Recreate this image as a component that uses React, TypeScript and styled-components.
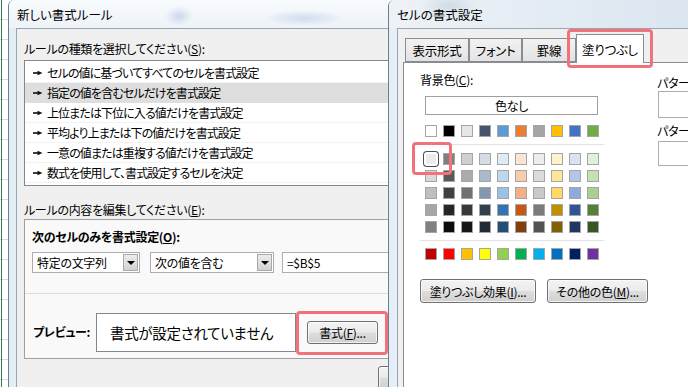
import styled, { createGlobalStyle } from 'styled-components';

const GlobalStyle = createGlobalStyle`
  html, body {
    margin: 0;
    padding: 0;
  }
  body {
    font-family: "Noto Sans CJK JP", "Noto Sans", sans-serif;
    font-size: 12px;
    font-feature-settings: "palt";
    letter-spacing: -0.3px;
    color: #000;
    background: #fff;
  }
  * {
    box-sizing: border-box;
  }
`;

const themeRow = ['#ffffff', '#000000', '#e7e6e6', '#44546a', '#5b9bd5', '#ed7d31', '#a5a5a5', '#ffc000', '#4472c4', '#70ad47'];

const tintRows = [
  ['#f2f2f2', '#7f7f7f', '#d0cece', '#d6dce4', '#ddebf7', '#fce4d6', '#ededed', '#fff2cc', '#d9e1f2', '#e2efda'],
  ['#d9d9d9', '#595959', '#aeaaaa', '#acb9ca', '#bdd7ee', '#f8cbad', '#dbdbdb', '#ffe699', '#b4c6e7', '#c6e0b4'],
  ['#bfbfbf', '#404040', '#757171', '#8497b0', '#9bc2e6', '#f4b084', '#c9c9c9', '#ffd966', '#8ea9db', '#a9d08e'],
  ['#a6a6a6', '#262626', '#3a3838', '#333f4f', '#2f75b5', '#c65911', '#7b7b7b', '#bf8f00', '#305496', '#548235'],
  ['#808080', '#0d0d0d', '#161616', '#222b35', '#1f4e78', '#833c0c', '#525252', '#806000', '#203764', '#375623'],
];

const standardRow = ['#c00000', '#ff0000', '#ffc000', '#ffff00', '#92d050', '#00b050', '#00b0f0', '#0070c0', '#002060', '#7030a0'];

const ruleTypes = [
  'セルの値に基づいてすべてのセルを書式設定',
  '指定の値を含むセルだけを書式設定',
  '上位または下位に入る値だけを書式設定',
  '平均より上または下の値だけを書式設定',
  '一意の値または重複する値だけを書式設定',
  '数式を使用して、書式設定するセルを決定',
];

const Desktop = styled.div`
  display: flex;
  width: 688px;
  height: 387px;
  overflow: hidden;
  background: #fff;
`;

const SheetStrip = styled.div`
  flex: none;
  width: 8px;
  background:
    linear-gradient(to right, transparent 1px, #2e7d4f 1px, #2e7d4f 2px, transparent 2px),
    repeating-linear-gradient(to bottom, #ffffff 0 19px, #dadada 19px 20px);
`;

const Window = styled.div<{ $width?: number }>`
  position: relative;
  flex: ${(p) => (p.$width ? 'none' : '1')};
  width: ${(p) => (p.$width ? `${p.$width}px` : 'auto')};
  display: flex;
  flex-direction: column;
  border-left: 1px solid #6c7d90;
  border-top-left-radius: 6px;
  background: linear-gradient(to right, #e4eef7, #f6f9fc 30%, #eef4fa);
  overflow: hidden;
`;

const TitleBar = styled.div<{ $tone: 'left' | 'right' }>`
  flex: none;
  height: 28px;
  display: flex;
  align-items: center;
  padding-left: 8px;
  font-size: 12.5px;
  letter-spacing: 0;
  background: ${(p) =>
    p.$tone === 'left'
      ? `radial-gradient(ellipse 14px 10px at 170px 16px, rgba(110, 150, 205, 0.3), transparent),
         radial-gradient(ellipse 40px 8px at 295px 18px, rgba(100, 140, 210, 0.25), transparent),
         linear-gradient(#f8fbfd, #eef3f8)`
      : `radial-gradient(ellipse 30px 14px at 60px 6px, rgba(150, 170, 195, 0.3), transparent),
         linear-gradient(90deg, #eef2f6, #dbe6f1)`};
`;

const ClientFrame = styled.div<{ $inset: number }>`
  flex: 1;
  display: flex;
  flex-direction: column;
  margin-left: ${(p) => p.$inset}px;
  border-left: 1px solid #97a6b6;
  border-top: 1px solid #97a6b6;
  background: #f0f0f0;
  overflow: hidden;
`;

const LeftClient = styled(ClientFrame)`
  padding: 12px 0 0 7px;
`;

const Label = styled.div<{ $bold?: boolean }>`
  line-height: 16px;
  height: 16px;
  white-space: nowrap;
  font-weight: ${(p) => (p.$bold ? 700 : 400)};
`;

const Accel = styled.span`
  text-decoration: underline;
`;

const ListBox = styled.div`
  margin-top: 3px;
  margin-right: -6px;
  padding: 2px 0;
  border: 1px solid #828790;
  background: #fff;
`;

const ListItem = styled.div<{ $selected?: boolean }>`
  display: flex;
  align-items: center;
  height: 20px;
  padding-left: 8px;
  gap: 4px;
  white-space: nowrap;
  letter-spacing: -0.9px;
  background: ${(p) => (p.$selected ? '#dedede' : 'transparent')};
  border-bottom: 1px solid ${(p) => (p.$selected ? '#dedede' : '#f3f3f3')};
`;

const SectionLabel = styled(Label)`
  margin-top: 16px;
`;

const EditBox = styled.div`
  margin-top: 1px;
  margin-right: -6px;
  border: 1px solid #a0a0a0;
  background: #f9f9f9;
`;

const CriteriaSection = styled.div`
  height: 74px;
  padding: 9px 0 0 7px;
  border-bottom: 1px solid #dcdcdc;
`;

const CriteriaRow = styled.div`
  display: flex;
  margin-top: 7px;
  height: 21px;
`;

const Select = styled.div<{ $width?: number; $gap?: number }>`
  flex: ${(p) => (p.$width ? 'none' : '1')};
  width: ${(p) => (p.$width ? `${p.$width}px` : 'auto')};
  margin-left: ${(p) => p.$gap ?? 0}px;
  display: flex;
  align-items: center;
  justify-content: space-between;
  padding-left: 4px;
  border: 1px solid #abadb3;
  background: #fff;
  white-space: nowrap;
`;

const DropButton = styled.div`
  width: 15px;
  height: 17px;
  margin-right: 1px;
  display: flex;
  align-items: center;
  justify-content: center;
  border: 1px solid #a9a9a9;
  background: linear-gradient(#ececec, #d2d2d2);

  &::after {
    content: '';
    border-left: 4px solid transparent;
    border-right: 4px solid transparent;
    border-top: 4px solid #000;
  }
`;

const PreviewSection = styled.div`
  height: 64px;
  padding: 19px 0 0 8px;
  display: flex;
  align-items: flex-start;
`;

const PreviewLabel = styled(Label)`
  width: 63px;
  margin-top: 11px;
`;

const PreviewBox = styled.div`
  width: 200px;
  height: 39px;
  display: flex;
  align-items: center;
  padding-left: 13px;
  border: 1px solid #828790;
  background: #fff;
  font-size: 14.5px;
  white-space: nowrap;
`;

const Button = styled.button<{ $width: number; $height?: number }>`
  flex: none;
  width: ${(p) => p.$width}px;
  height: ${(p) => p.$height ?? 23}px;
  padding: 0;
  font-family: inherit;
  font-size: 12px;
  font-feature-settings: "palt";
  letter-spacing: -0.3px;
  color: #000;
  white-space: nowrap;
  border: 1px solid #707070;
  border-radius: 3px;
  background: linear-gradient(#f3f3f3 0%, #ebebeb 48%, #dddddd 52%, #d0d0d0 100%);
  box-shadow: inset 0 0 0 1px rgba(255, 255, 255, 0.7);
`;

const FormatButton = styled(Button)`
  margin: 8px 0 0 11px;
`;

const FooterRow = styled.div`
  display: flex;
  margin-top: 7px;
  padding-left: 354px;
`;

const Highlight = styled.div<{ $left: number; $top: number; $width: number; $height: number }>`
  position: absolute;
  left: ${(p) => p.$left}px;
  top: ${(p) => p.$top}px;
  width: ${(p) => p.$width}px;
  height: ${(p) => p.$height}px;
  border: 3px solid #f17379;
  border-radius: 4px;
  z-index: 5;
  pointer-events: none;
`;

const RightClient = styled(ClientFrame)`
  padding: 5px 0 0 5px;
`;

const TabRow = styled.div`
  display: flex;
  align-items: flex-end;
  height: 28px;
  padding-left: 2px;
`;

const Tab = styled.div<{ $width: number; $active?: boolean }>`
  position: relative;
  z-index: ${(p) => (p.$active ? 2 : 1)};
  width: ${(p) => p.$width}px;
  height: ${(p) => (p.$active ? 29 : 24)}px;
  margin-bottom: ${(p) => (p.$active ? -1 : 0)}px;
  display: flex;
  align-items: center;
  justify-content: center;
  padding-top: ${(p) => (p.$active ? 0 : 1)}px;
  border: 1px solid #898c95;
  border-bottom: ${(p) => (p.$active ? 'none' : '1px solid #898c95')};
  background: ${(p) => (p.$active ? '#fff' : 'linear-gradient(#f2f2f2, #e3e3e3)')};
  font-size: 12.5px;
  white-space: nowrap;
`;

const TabPanel = styled.div`
  flex: 1;
  display: flex;
  padding: 9px 0 0 16px;
  border: 1px solid #898c95;
  border-right: none;
  border-bottom: none;
  background: #fff;
`;

const FillColumn = styled.div`
  flex: none;
  width: 237px;
  display: flex;
  flex-direction: column;
`;

const NoColorBox = styled.div`
  width: 173px;
  height: 19px;
  margin: 8px 0 0 5px;
  display: flex;
  align-items: center;
  justify-content: center;
  border: 1px solid #a0a0a0;
  background: #fff;
`;

const SwatchGrid = styled.div<{ $top: number }>`
  display: grid;
  grid-template-columns: repeat(10, 12px);
  grid-auto-rows: 12px;
  column-gap: 6px;
  row-gap: 5px;
  margin: ${(p) => p.$top}px 0 0 5px;
`;

const Swatch = styled.div<{ $color: string; $selected?: boolean }>`
  width: 12px;
  height: 12px;
  background: ${(p) => p.$color};
  border: 1px solid #a5a5a5;
  ${(p) =>
    p.$selected
      ? `border-color: #fff; box-shadow: 0 0 0 1px #fff, 0 0 0 2px #4d4d4d; border-radius: 2px; background: #ececec;`
      : ''}
`;

const Separator = styled.div`
  width: 184px;
  height: 1px;
  margin-top: 7px;
  background: #e2e2e2;
`;

const ButtonRow = styled.div`
  display: flex;
  gap: 11px;
  margin-top: 19px;
`;

const PatternColumn = styled.div`
  flex: none;
  width: 120px;
  display: flex;
  flex-direction: column;
  padding-top: 3px;
`;

const PatternBox = styled.div<{ $height: number; $gap?: number }>`
  height: ${(p) => p.$height}px;
  margin: ${(p) => p.$gap ?? 0}px 0 0 1px;
  border: 1px solid #abadb3;
  background: #fff;
`;

const PatternLabel = styled(Label)<{ $gap: number }>`
  margin-top: ${(p) => p.$gap}px;
`;

const Bullet = () => (
  <svg width="10" height="6" viewBox="0 0 10 6">
    <rect x="0" y="2.2" width="5" height="1.6" fill="#111" />
    <polygon points="4.5,0.8 9.5,3 4.5,5.2" fill="#111" />
  </svg>
);

const tabs = [
  { label: '表示形式', width: 64 },
  { label: 'フォント', width: 53 },
  { label: '罫線', width: 54 },
  { label: '塗りつぶし', width: 68, active: true },
];

const App = () => {
  return (
    <>
      <GlobalStyle />
      <Desktop>
        <SheetStrip />

        <Window $width={380}>
          <TitleBar $tone="left">新しい書式ルール</TitleBar>
          <LeftClient $inset={7}>
            <Label>
              ルールの種類を選択してください(<Accel>S</Accel>):
            </Label>
            <ListBox>
              {ruleTypes.map((rule, i) => (
                <ListItem key={rule} $selected={i === 1}>
                  <Bullet />
                  {rule}
                </ListItem>
              ))}
            </ListBox>

            <SectionLabel>
              ルールの内容を編集してください(<Accel>E</Accel>):
            </SectionLabel>
            <EditBox>
              <CriteriaSection>
                <Label $bold>
                  次のセルのみを書式設定(<Accel>O</Accel>):
                </Label>
                <CriteriaRow>
                  <Select $width={108}>
                    特定の文字列
                    <DropButton />
                  </Select>
                  <Select $width={124} $gap={10}>
                    次の値を含む
                    <DropButton />
                  </Select>
                  <Select $gap={8}>=$B$5</Select>
                </CriteriaRow>
              </CriteriaSection>
              <PreviewSection>
                <PreviewLabel $bold>プレビュー:</PreviewLabel>
                <PreviewBox>書式が設定されていません</PreviewBox>
                <FormatButton $width={71}>
                  書式(<Accel>F</Accel>)...
                </FormatButton>
              </PreviewSection>
            </EditBox>
            <FooterRow>
              <Button $width={80} />
            </FooterRow>
          </LeftClient>
          <Highlight $left={287} $top={311} $width={92} $height={44} />
        </Window>

        <Window>
          <TitleBar $tone="right">セルの書式設定</TitleBar>
          <RightClient $inset={8}>
            <TabRow>
              {tabs.map((tab) => (
                <Tab key={tab.label} $width={tab.width} $active={tab.active}>
                  {tab.label}
                </Tab>
              ))}
            </TabRow>
            <TabPanel>
              <FillColumn>
                <Label>
                  背景色(<Accel>C</Accel>):
                </Label>
                <NoColorBox>色なし</NoColorBox>
                <SwatchGrid $top={10}>
                  {themeRow.map((c, i) => (
                    <Swatch key={`t${i}`} $color={c} />
                  ))}
                </SwatchGrid>
                <Separator />
                <SwatchGrid $top={8}>
                  {tintRows.flatMap((row, r) =>
                    row.map((c, i) => (
                      <Swatch key={`r${r}c${i}`} $color={c} $selected={r === 0 && i === 0} />
                    ))
                  )}
                </SwatchGrid>
                <Separator />
                <SwatchGrid $top={7}>
                  {standardRow.map((c, i) => (
                    <Swatch key={`s${i}`} $color={c} />
                  ))}
                </SwatchGrid>
                <ButtonRow>
                  <Button $width={116} $height={24}>
                    塗りつぶし効果(<Accel>I</Accel>)...
                  </Button>
                  <Button $width={101} $height={24}>
                    その他の色(<Accel>M</Accel>)...
                  </Button>
                </ButtonRow>
              </FillColumn>
              <PatternColumn>
                <PatternLabel $gap={0}>
                  パターンの色(<Accel>A</Accel>):
                </PatternLabel>
                <PatternBox $height={27} />
                <PatternLabel $gap={5}>
                  パターンの種類(<Accel>P</Accel>):
                </PatternLabel>
                <PatternBox $height={25} $gap={2} />
              </PatternColumn>
            </TabPanel>
          </RightClient>
          <Highlight $left={178} $top={29} $width={86} $height={39} />
          <Highlight $left={23} $top={142} $width={40} $height={33} />
        </Window>
      </Desktop>
    </>
  );
};

export default App;
